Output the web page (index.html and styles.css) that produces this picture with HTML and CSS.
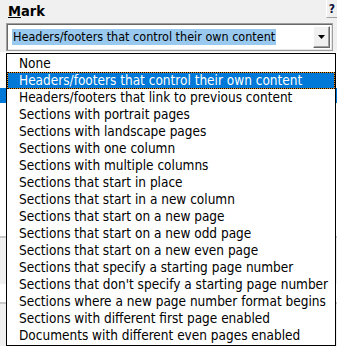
FILE: index.html
```html
<!DOCTYPE html>
<html lang="en">
<head>
    <meta charset="UTF-8">
    <meta name="viewport" content="width=device-width, initial-scale=1.0">
    <title>Mark</title>
    <link rel="stylesheet" href="styles.css">
</head>
<body>
    <div class="dialog">
        <div class="head">
            <label class="title" for="mark"><u>M</u>ark</label>
            <button class="help">?</button>
        </div>

        <div class="combo" id="mark">
            <span class="value">Headers/footers that control their own content</span>
            <span class="drop">
                <svg width="7" height="4" viewBox="0 0 7 4"><path d="M0 0h7L3.5 4z" fill="#000"/></svg>
            </span>
        </div>

        <!-- what shows of the dialog behind the open list -->
        <div class="behind">
            <div class="pane">
                <div class="sel"></div>
            </div>
            <div class="strip"></div>
            <div class="field"></div>
            <div class="strip"></div>
        </div>
    </div>

    <ul class="list">
        <li>None</li>
        <li class="current">Headers/footers that control their own content</li>
        <li>Headers/footers that link to previous content</li>
        <li>Sections with portrait pages</li>
        <li>Sections with landscape pages</li>
        <li>Sections with one column</li>
        <li>Sections with multiple columns</li>
        <li>Sections that start in place</li>
        <li>Sections that start in a new column</li>
        <li>Sections that start on a new page</li>
        <li>Sections that start on a new odd page</li>
        <li>Sections that start on a new even page</li>
        <li>Sections that specify a starting page number</li>
        <li>Sections that don't specify a starting page number</li>
        <li>Sections where a new page number format begins</li>
        <li>Sections with different first page enabled</li>
        <li>Documents with different even pages enabled</li>
    </ul>
</body>
</html>
```

FILE: styles.css
```css
body {
    margin: 0;
    width: 337px;
    height: 346px;
    overflow: hidden;
    position: relative;
    background-color: #f0f0f0;
    font-family: "DejaVu Sans Condensed", "DejaVu Sans", sans-serif;
    color: #000;
}
.head {
    display: flex;
    justify-content: space-between;
    height: 23px;
}
.title {
    padding: 3px 0 0 8px;
    font-weight: bold;
    font-size: 14.5px;
    line-height: 17px;
}
.help {
    width: 11px;
    height: 18px;
    padding: 0;
    border: none;
    border-left: 1px solid #fff;
    border-bottom: 1px solid #a0a0a0;
    background-color: #f0f0f0;
    font-family: inherit;
    font-weight: bold;
    font-size: 12px;
    line-height: 14px;
    color: #10103a;
}
.combo {
    display: flex;
    box-sizing: border-box;
    width: 327px;
    height: 28px;
    margin-left: 6px;
    border: 1px solid #a0a0a0;
    box-shadow: inset 1px 1px 0 #696969, inset -1px -1px 0 #e3e3e3;
    background-color: #fff;
    padding: 1px;
}
.value {
    margin: 4px 0 0 4px;
    height: 16px;
    padding: 0 1px;
    font-size: 12.5px;
    line-height: 16px;
    background-color: #99c9ef;
}
.drop {
    display: flex;
    align-items: center;
    justify-content: center;
    box-sizing: border-box;
    width: 17px;
    height: 22px;
    margin: 1px 1px 0 auto;
    background-color: #f0f0f0;
    border-top: 1px solid #fff;
    border-left: 1px solid #fff;
    border-right: 1px solid #696969;
    border-bottom: 1px solid #696969;
    box-shadow: inset -1px -1px 0 #a0a0a0;
}
.behind {
    display: flex;
    flex-direction: column;
    margin-top: 1px;
}
.pane {
    height: 184px;
    padding-top: 36px;
    box-sizing: border-box;
    background-color: #fff;
}
.sel {
    height: 15px;
    background-color: #0078d7;
}
.strip {
    height: 46px;
    border-top: 2px solid #c8c8c8;
    background-color: #f0f0f0;
}
.field {
    height: 18px;
    background-color: #fff;
}
.list {
    position: absolute;
    left: 6px;
    top: 53px;
    box-sizing: border-box;
    width: 330px;
    height: 293px;
    margin: 0;
    padding: 1px 0;
    list-style: none;
    border: 1px solid #000;
    background-color: #fff;
    font-size: 13.5px;
}
.list li {
    height: 17px;
    line-height: 17px;
    padding-left: 12px;
    white-space: nowrap;
}
.list .current {
    box-sizing: border-box;
    padding-left: 11px;
    line-height: 15px;
    border: 1px dotted #000;
    background: linear-gradient(#0078d7, #0078d7) padding-box, #e8901c border-box;
    color: #fff;
}
```
